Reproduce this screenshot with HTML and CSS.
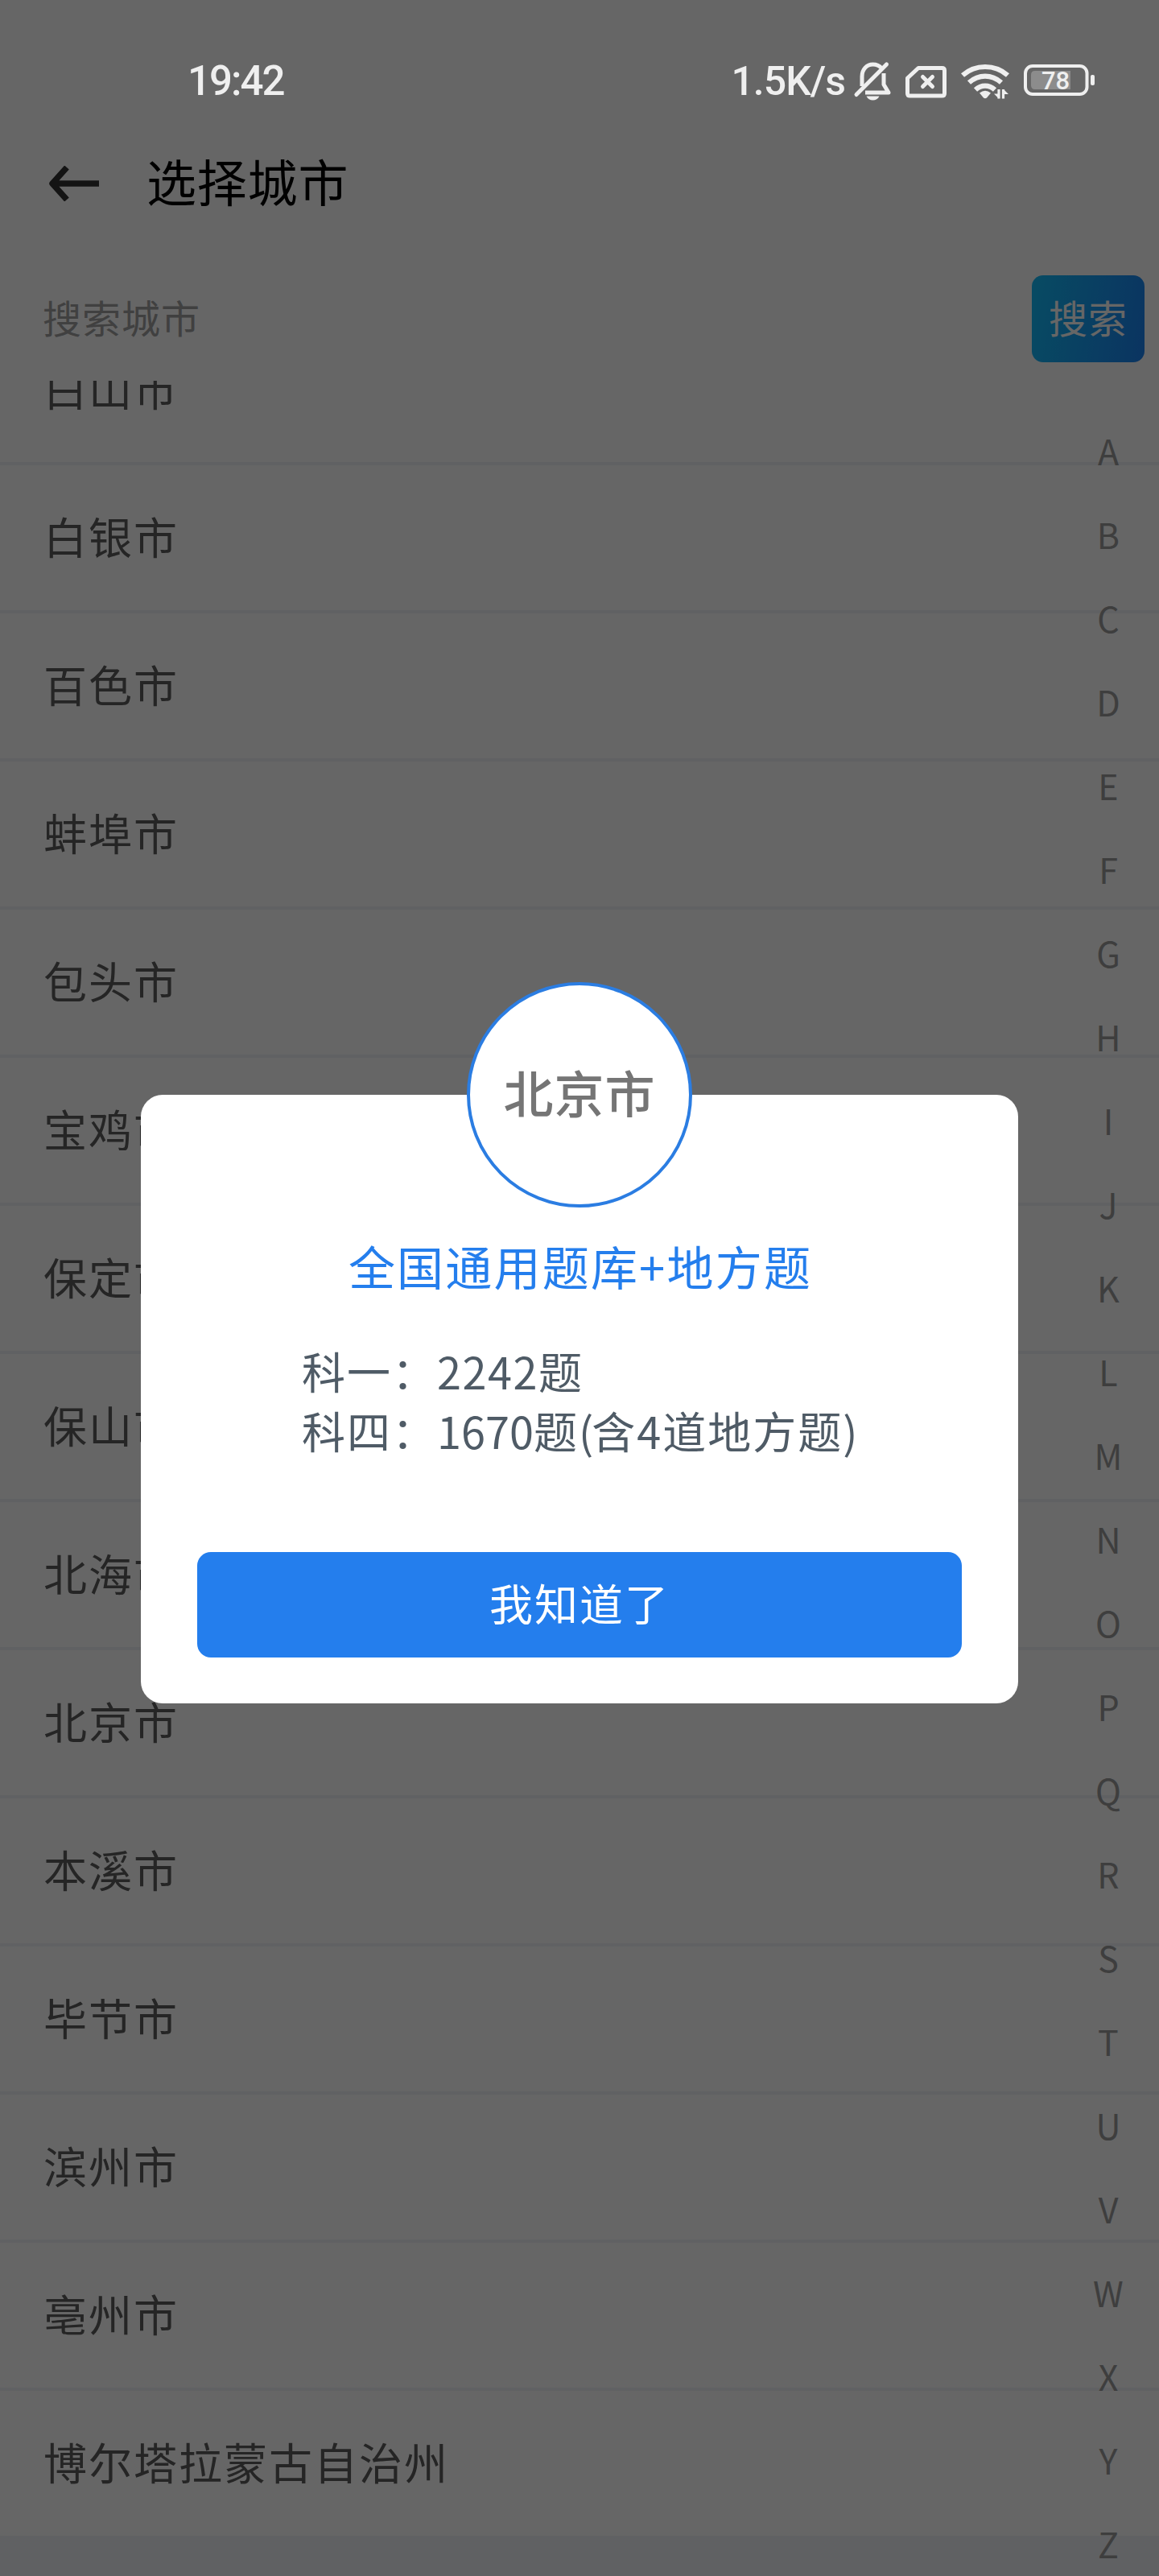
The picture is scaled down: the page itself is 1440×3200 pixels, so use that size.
FILE: index.html
```html
<!DOCTYPE html>
<html lang="zh-CN">
<head>
<meta charset="utf-8">
<title>选择城市</title>
<link rel="stylesheet" href="styles.css">
</head>
<body>
<div class="screen">
  <div class="status">
    <span class="clock">19:42</span>
    <div class="indicators">
      <span class="speed">1.5K/s</span>
      <svg class="ic-bell" width="48" height="50" viewBox="0 0 48 50" fill="none" stroke="#efefef" stroke-width="5" stroke-linejoin="round">
        <path d="M10 31V19C10 10 16 4 23.500 4C28 4 32 6 34.500 9"/>
        <path d="M3 41.500L40.500 4" stroke-linecap="round"/>
        <path d="M14 39H43L37 29V15"/>
        <path d="M15.500 43.500H31.500C30 47 27 48.500 23.500 48.500S17 47 15.500 43.500Z" fill="#efefef" stroke="none"/>
      </svg>
      <svg class="ic-sim" width="51" height="40" viewBox="0 0 51 40" fill="none" stroke="#efefef" stroke-width="5" stroke-linejoin="round">
        <path d="M16 2.500H45.500Q48.500 2.500 48.500 5.500V34Q48.500 37 45.500 37H5.500Q2.500 37 2.500 34V15Z"/>
        <path d="M21.500 13.500L33.500 25.500M33.500 13.500L21.500 25.500" stroke-linecap="round"/>
      </svg>
      <svg class="ic-wifi" width="60" height="46" viewBox="0 0 60 46" fill="none" stroke="#efefef" stroke-width="6.200">
        <path d="M2 15.500C18 1.500 42 1.500 58 15.500"/>
        <path d="M10 24.500C22 14 38 14 50 24.500"/>
        <path d="M18 33.500C25 27 35 27 42 33.500"/>
        <path d="M23 37.500Q30 32 37 37.500L32 43.500Q30 45 28 43.500Z" fill="#efefef" stroke="none"/>
        <path d="M47 33V44.500M52.500 44.500V33" stroke-width="3.200"/>
        <path d="M41 38.500H47V44.500ZM59 39H53V33Z" fill="#efefef" stroke="none"/>
      </svg>
      <svg class="ic-battery" width="89" height="40" viewBox="0 0 89 40">
        <rect x="2" y="2" width="76.500" height="35" rx="9" fill="none" stroke="#efefef" stroke-width="4"/>
        <path d="M58 8V31H14Q9 31 9 26V13Q9 8 14 8Z" fill="#8c8c8c"/>
        <rect x="83" y="13" width="5" height="13" rx="2" fill="#efefef"/>
        <text class="charge" x="39.500" y="31" text-anchor="middle">78</text>
      </svg>
    </div>
  </div>

  <div class="header">
    <svg width="64" height="44" viewBox="0 0 64 44" fill="none" stroke="#333" stroke-width="7.500" stroke-linejoin="round"><path d="M23 2L5 22L23 42M5 22H63"/></svg>
    <h1 class="title">选择城市</h1>
  </div>

  <div class="search">
    <span class="placeholder">搜索城市</span>
    <span class="search-btn">搜索</span>
  </div>

  <div class="list-area">
    <ul class="cities">
      <li>白山市</li><li>白银市</li><li>百色市</li><li>蚌埠市</li><li>包头市</li>
      <li>宝鸡市</li><li>保定市</li><li>保山市</li><li>北海市</li><li>北京市</li>
      <li>本溪市</li><li>毕节市</li><li>滨州市</li><li>亳州市</li><li>博尔塔拉蒙古自治州</li>
    </ul>
    <ul class="index">
      <li>A</li><li>B</li><li>C</li><li>D</li><li>E</li><li>F</li><li>G</li><li>H</li><li>I</li>
      <li>J</li><li>K</li><li>L</li><li>M</li><li>N</li><li>O</li><li>P</li><li>Q</li><li>R</li>
      <li>S</li><li>T</li><li>U</li><li>V</li><li>W</li><li>X</li><li>Y</li><li>Z</li>
    </ul>
  </div>

  <div class="overlay">
    <div class="dialog">
      <div class="badge">北京市</div>
      <div class="dialog-title">全国通用题库+地方题</div>
      <div class="counts">
        <div>科一：<span class="num">2242</span>题</div>
        <div>科四：<span class="num-tight">1670</span>题<span class="paren">(</span>含4道地方题)</div>
      </div>
      <div class="confirm">我知道了</div>
    </div>
  </div>
</div>
</body>
</html>
```
FILE: styles.css
```css
* { box-sizing: border-box; margin: 0; padding: 0; }
body { font-family: "Noto Sans CJK SC", sans-serif; background: #fff; }
ul { list-style: none; }
svg { display: block; flex: none; }

.screen { position: relative; width: 1440px; height: 3200px; overflow: hidden; display: flex; flex-direction: column; background: #fff; }

.status { position: relative; z-index: 3; height: 160px; padding: 60px 79px 20px 233px; display: flex; justify-content: space-between; color: #efefef; font-family: Roboto, sans-serif; line-height: 82px; }
.clock { font-size: 51px; font-weight: 500; letter-spacing: -2px; }
.indicators { display: flex; align-items: flex-start; }
.speed { font-size: 50px; font-weight: 500; letter-spacing: -1px; margin-right: 11px; }
.ic-bell { margin: 16px 16px 0 0; overflow: visible; }
.ic-sim { margin: 22px 18px 0 0; }
.ic-wifi { margin: 18px 18px 0 0; }
.ic-battery { margin: 20px 0 0; }
.charge { font: 500 31px Roboto, sans-serif; fill: #efefef; }

.header { height: 136px; padding-left: 60px; display: flex; align-items: center; gap: 58px; }
.title { font-size: 62px; font-weight: 400; line-height: 80px; letter-spacing: .800px; color: #000; padding-bottom: 8px; }

.search { height: 177px; padding: 46px 18px 23px 53px; display: flex; justify-content: space-between; }
.placeholder { font-size: 48px; line-height: 102px; letter-spacing: 1px; color: #a0a0a0; }
.search-btn { width: 140px; height: 108px; border-radius: 14px; background: linear-gradient(100deg, #14bcf8, #1c82f2); color: #fff; font-size: 48px; line-height: 102px; text-align: center; letter-spacing: 1px; }

.list-area { position: relative; flex: 1; overflow: hidden; background: #f0f3f7; }
.cities { margin-top: -79px; }
.cities li { height: 184px; padding-left: 54px; border-bottom: 4px solid #f0f3f7; background: #fff; font-size: 54px; line-height: 176px; letter-spacing: 2px; color: #5c5c5c; }
.cities li:last-child { height: 180px; border-bottom: 0; }
.index { position: absolute; top: 34px; right: 23px; width: 80px; }
.index li { height: 104px; line-height: 104px; font-size: 43px; text-align: center; color: #9b9b9b; }

.overlay { position: absolute; inset: 0; z-index: 2; padding-top: 1360px; background: rgba(0, 0, 0, .6); }
.dialog { position: relative; width: 1090px; height: 756px; margin: 0 auto; padding: 165px 70px 57px; border-radius: 27px; background: #fff; display: flex; flex-direction: column; }
.badge { position: absolute; left: 405px; top: -140px; width: 280px; height: 280px; border: 4px solid #2b7de2; border-radius: 50%; background: #fff; font-size: 62px; font-weight: 500; line-height: 265px; letter-spacing: 1px; text-align: center; color: #757575; }
.dialog-title { font-size: 58px; line-height: 94px; letter-spacing: 2.200px; padding-left: 2px; text-align: center; color: #247eed; }
.counts { margin: 47px 0 0 130px; font-size: 54px; line-height: 74px; letter-spacing: 2px; color: #4f5b66; white-space: nowrap; }
.num { letter-spacing: 1.500px; }
.num-tight { letter-spacing: 0; }
.paren { letter-spacing: -2px; }
.confirm { margin-top: auto; height: 131px; border-radius: 17px; background: #247eed; color: #fff; font-size: 54px; line-height: 126px; letter-spacing: 2px; text-align: center; }
```
